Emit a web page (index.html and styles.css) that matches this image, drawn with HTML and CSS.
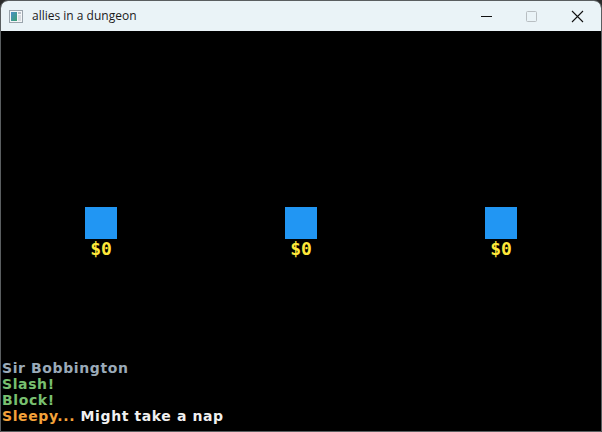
FILE: index.html
```html
<!DOCTYPE html>
<html>
<head>
<meta charset="utf-8">
<link rel="stylesheet" href="styles.css">
</head>
<body>
<div class="window">
  <div class="titlebar">
    <svg class="appicon" width="14" height="13" viewBox="0 0 14 13">
      <defs>
        <linearGradient id="g" x1="0" y1="0" x2="1" y2="1">
          <stop offset="0" stop-color="#4a8fc8"/>
          <stop offset="1" stop-color="#3aa070"/>
        </linearGradient>
      </defs>
      <rect x="0.5" y="0.5" width="13" height="12" fill="#f4f6f8" stroke="#9aa4ac"/>
      <rect x="2" y="2" width="6" height="9" fill="url(#g)"/>
      <rect x="9" y="2" width="3" height="2" fill="#b8c0c8"/>
      <rect x="9" y="5" width="3" height="6" fill="#d8dde2"/>
    </svg>
    <span class="title">allies in a dungeon</span>
    <div class="controls">
      <svg class="ctl" width="46" height="30" viewBox="0 0 46 30"><line x1="18" y1="15.5" x2="29" y2="15.5" stroke="#111" stroke-width="1"/></svg>
      <svg class="ctl" width="46" height="30" viewBox="0 0 46 30"><rect x="17.5" y="10.5" width="10" height="10" rx="1" fill="none" stroke="#b8bec2" stroke-width="1"/></svg>
      <svg class="ctl" width="46" height="30" viewBox="0 0 46 30"><path d="M17 10 L28 21 M28 10 L17 21" stroke="#111" stroke-width="1.1"/></svg>
    </div>
  </div>
  <div class="game">
    <div class="allies">
      <div class="ally"><div class="sq"></div><div class="gold">$0</div></div>
      <div class="ally"><div class="sq"></div><div class="gold">$0</div></div>
      <div class="ally"><div class="sq"></div><div class="gold">$0</div></div>
    </div>
    <div class="log">
      <div class="name">Sir Bobbington</div>
      <div class="act">Slash!</div>
      <div class="act">Block!</div>
      <div><span class="sleepy">Sleepy...</span> <span class="msg">Might take a nap</span></div>
    </div>
  </div>
</div>
</body>
</html>
```
FILE: styles.css
```css
html, body {
  margin: 0;
  padding: 0;
  width: 602px;
  height: 432px;
  overflow: hidden;
  background: #2b2b2b;
}
.window {
  width: 602px;
  height: 432px;
  box-sizing: border-box;
  border: 1px solid #5a5e60;
  border-radius: 8px 8px 0 0;
  overflow: hidden;
  display: flex;
  flex-direction: column;
  background: #000;
}
.titlebar {
  height: 30px;
  flex: none;
  background: #eaf3f7;
  display: flex;
  align-items: center;
  padding-left: 8px;
}
.appicon {
  flex: none;
}
.title {
  margin-left: 9px;
  font-family: "Open Sans", "Noto Sans", sans-serif;
  font-size: 12px;
  color: #1a1a1a;
  margin-top: -1px;
}
.controls {
  margin-left: auto;
  display: flex;
  align-self: flex-start;
}
.ctl {
  display: block;
}
.game {
  flex: 1;
  display: flex;
  flex-direction: column;
  background: #000;
}
.allies {
  display: flex;
  gap: 168px;
  padding-left: 84px;
  padding-top: 176px;
}
.ally {
  width: 32px;
  display: flex;
  flex-direction: column;
  align-items: center;
}
.sq {
  width: 32px;
  height: 32px;
  background: #2196f3;
}
.gold {
  font-family: "DejaVu Sans Mono", monospace;
  font-weight: bold;
  font-size: 18px;
  color: #ffe83a;
  line-height: 18px;
  margin-top: 1px;
}
.log {
  margin-top: auto;
  padding-left: 1px;
  padding-bottom: 7px;
  font-family: "DejaVu Sans", sans-serif;
  font-weight: bold;
  font-size: 14px;
  line-height: 16px;
  letter-spacing: 0.6px;
}
.name { color: #9aaab8; }
.act { color: #78c070; }
.sleepy { color: #f4a23a; }
.msg { color: #f0f0f0; }
```
